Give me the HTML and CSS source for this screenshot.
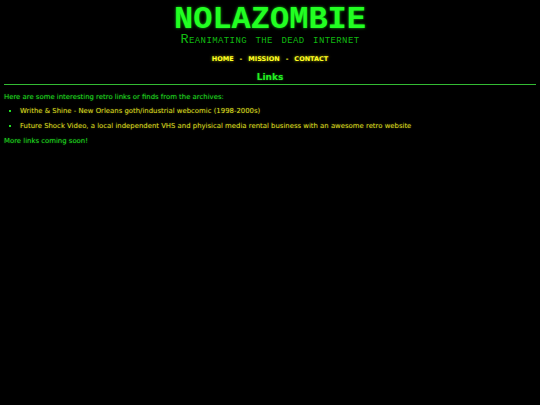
FILE: index.html
```
<!DOCTYPE html>
<html>
<head>
<meta charset="utf-8">
<link rel="stylesheet" href="styles.css">
</head>
<body>
<header class="header">
  <h1 class="title">NOLAZOMBIE</h1>
  <div class="tagline">Reanimating the dead internet</div>
  <nav class="nav"><a href="#">HOME</a><span class="sep">-</span><a href="#">MISSION</a><span class="sep">-</span><a href="#">CONTACT</a></nav>
  <h2 class="section-title">Links</h2>
</header>
<main class="content">
  <p class="intro">Here are some interesting retro links or finds from the archives:</p>
  <ul class="links">
    <li><a href="#">Writhe &amp; Shine - New Orleans goth/industrial webcomic (1998-2000s)</a></li>
    <li><a href="#">Future Shock Video, a local independent VHS and phyisical media rental business with an awesome retro website</a></li>
  </ul>
  <p class="intro">More links coming soon!</p>
</main>
</body>
</html>
```
FILE: styles.css
```
html, body { background: #000; }
body {
  margin: 0;
  padding: 0 4px;
  font-family: "DejaVu Sans", Verdana, sans-serif;
  font-size: 6.9px;
  color: #22dd22;
}
.header { text-align: center; }
.title {
  margin: 0;
  padding-top: 5px;
  font-family: "Liberation Mono", "Courier New", monospace;
  font-size: 32px;
  font-weight: bold;
  line-height: 30px;
  color: #22ff22;
  text-shadow: 0 0 3px #11aa11;
}
.tagline {
  font-family: "Liberation Mono", "Courier New", monospace;
  font-variant: small-caps;
  font-size: 13.5px;
  letter-spacing: 0.4px;
  line-height: 10px;
  color: #11bb11;
}
.nav { margin-top: 10px; font-weight: bold; font-size: 6.5px; }
.nav a { color: #ffff22; text-decoration: none; text-shadow: 0 0 3px #aaaa00; }
.nav .sep { color: #ffff22; margin: 0 6px; }
.section-title {
  margin: 9px 0 0;
  padding-bottom: 2px;
  font-size: 9px;
  font-weight: bold;
  color: #22ee22;
  border-bottom: 1px solid #33bb33;
  text-shadow: 0 0 2px #117711;
}
.content { padding-top: 8px; }
.intro { margin: 0 0 6px; text-shadow: 0 0 2px #0a660a; }
.links { margin: 0 0 7px; padding-left: 16px; list-style: square; color: #22dd22; }
.links li { margin-bottom: 7px; }
.links a { color: #dddd22; text-decoration: none; text-shadow: 0 0 2px #555500; }
```
